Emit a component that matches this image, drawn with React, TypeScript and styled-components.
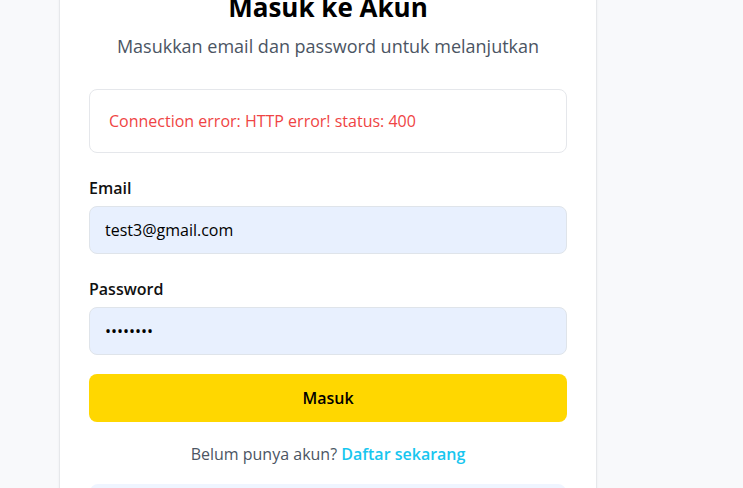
import React from "react";
import styled, { createGlobalStyle } from "styled-components";

const Global = createGlobalStyle`
  html, body { margin: 0; padding: 0; background: #f8f9fb; overflow: hidden; }
  body { font-family: "Open Sans", "Noto Sans", sans-serif; }
  * { box-sizing: border-box; }
`;

const Page = styled.div`
  display: flex;
  align-items: flex-start;
  padding-left: 59px;
  height: 488px;
  overflow: hidden;
`;

const Card = styled.div`
  width: 538px;
  margin-top: -41px;
  background: #ffffff;
  border: 1px solid #e6e8eb;
  border-radius: 12px;
  box-shadow: 0 1px 3px rgba(0, 0, 0, 0.05);
  padding: 30px 29px;
  display: flex;
  flex-direction: column;
`;

const Title = styled.h1`
  margin: 0;
  font-size: 26px;
  line-height: 34px;
  font-weight: 700;
  color: #000;
  text-align: center;
`;

const Subtitle = styled.p`
  margin: 9px 0 30px;
  font-size: 18px;
  line-height: 26px;
  color: #4b5563;
  text-align: center;
`;

const ErrorBox = styled.div`
  border: 1px solid #e5e7eb;
  border-radius: 8px;
  height: 64px;
  padding: 0 19px;
  display: flex;
  align-items: center;
  color: #ef4444;
  font-size: 16px;
  margin-bottom: 23px;
`;

const Field = styled.div`
  display: flex;
  flex-direction: column;
  gap: 6px;
  margin-bottom: ${(p: { $mb: number }) => p.$mb}px;
`;

const Label = styled.label`
  font-size: 16px;
  line-height: 24px;
  font-weight: 600;
  color: #111;
`;

const Input = styled.input`
  height: 48px;
  width: 100%;
  background: #e8f0fe;
  border: 1px solid #dfe4ea;
  border-radius: 8px;
  padding: 0 15px;
  font-family: inherit;
  font-size: 16px;
  color: #000;
  outline: none;
`;

const Button = styled.button`
  height: 48px;
  width: 100%;
  border: none;
  border-radius: 8px;
  background: #ffd700;
  color: #000;
  font-family: inherit;
  font-size: 16px;
  font-weight: 600;
`;

const Footer = styled.p`
  margin: 20px 0 18px;
  font-size: 16px;
  line-height: 24px;
  color: #4b5563;
  text-align: center;
`;

const Link = styled.a`
  color: #17c6ef;
  font-weight: 600;
  text-decoration: none;
`;

const InfoBox = styled.div`
  height: 60px;
  margin: 0 1px;
  background: #eff5ff;
  border-radius: 8px;
`;

export default function App() {
  return (
    <>
      <Global />
      <Page>
        <Card>
          <Title>Masuk ke Akun</Title>
          <Subtitle>Masukkan email dan password untuk melanjutkan</Subtitle>
          <ErrorBox>Connection error: HTTP error! status: 400</ErrorBox>
          <Field $mb={23}>
            <Label>Email</Label>
            <Input type="email" defaultValue="test3@gmail.com" />
          </Field>
          <Field $mb={19}>
            <Label>Password</Label>
            <Input type="password" defaultValue="12345678" />
          </Field>
          <Button>Masuk</Button>
          <Footer>
            Belum punya akun? <Link href="#">Daftar sekarang</Link>
          </Footer>
          <InfoBox />
        </Card>
      </Page>
    </>
  );
}
